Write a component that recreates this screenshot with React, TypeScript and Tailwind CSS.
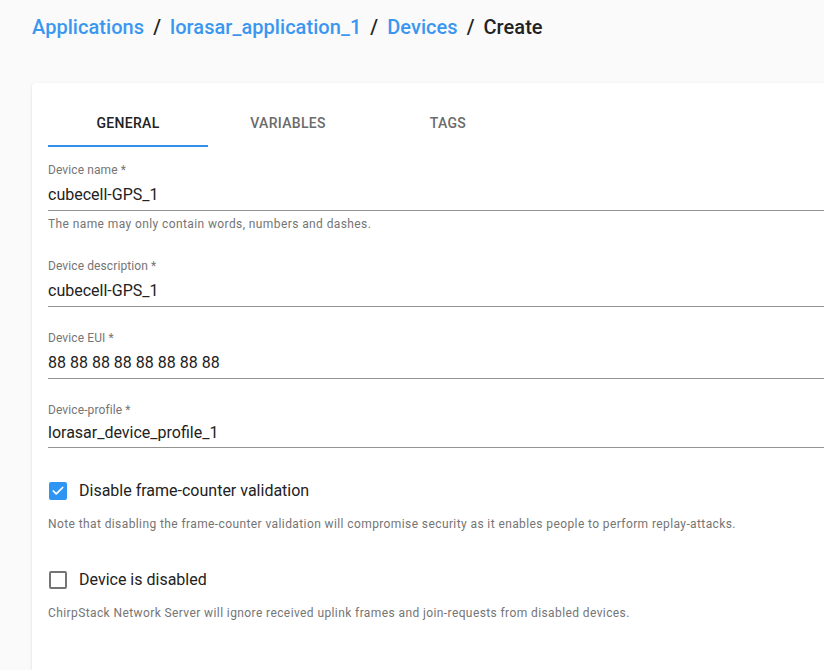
import { Check } from 'lucide-react';

const tabs = ['General', 'Variables', 'Tags'];

const crumbs = [
  { label: 'Applications', link: true },
  { label: 'lorasar_application_1', link: true },
  { label: 'Devices', link: true },
  { label: 'Create', link: false },
];

function Field({
  label,
  value,
  helper,
  select,
  className,
}: {
  label: string;
  value: string;
  helper?: string;
  select?: boolean;
  className?: string;
}) {
  return (
    <div className={className}>
      <div className="text-[12px] leading-[14px] tracking-[0.1px] text-[#757575]">{label}</div>
      <div
        className={
          select
            ? 'pt-[6px] pb-[5px] text-[16px] leading-[19px] text-[#222] border-b border-[#949494]'
            : 'pt-[8px] pb-[6px] text-[16px] leading-[19px] text-[#222] border-b border-[#949494]'
        }
      >
        {value}
      </div>
      {helper && (
        <div className="mt-[6px] text-[12px] leading-[14px] tracking-[0.4px] text-[#757575]">{helper}</div>
      )}
    </div>
  );
}

function CheckRow({ checked, label, note, className }: { checked: boolean; label: string; note: string; className?: string }) {
  return (
    <div className={className}>
      <div className="flex items-center h-12">
        {checked ? (
          <span className="ml-px flex h-[18px] w-[18px] items-center justify-center rounded-[2px] bg-[#2f95f3]">
            <Check className="h-[14px] w-[14px] text-white" strokeWidth={3} />
          </span>
        ) : (
          <span className="ml-px h-[18px] w-[18px] rounded-[2px] border-2 border-[#757575]" />
        )}
        <span className="ml-3 text-[16px] text-[#222]">{label}</span>
      </div>
      <div className="mt-[2px] text-[12px] leading-[14px] tracking-[0.4px] text-[#757575]">{note}</div>
    </div>
  );
}

export default function App() {
  return (
    <div
      className="h-[670px] w-[824px] overflow-hidden bg-[#fafafa]"
      style={{ fontFamily: 'Roboto, "Liberation Sans", sans-serif' }}
    >
      {/* breadcrumb */}
      <div className="flex items-center gap-[9px] px-8 pt-[15px] text-[20px] leading-6 font-medium tracking-[0.05px]">
        {crumbs.map((c, i) => (
          <div key={c.label} className="flex items-center gap-[9px]">
            {i > 0 && <span className="text-[#222]">/</span>}
            <span className={c.link ? 'text-[#3a97f0]' : 'text-[#222]'}>{c.label}</span>
          </div>
        ))}
      </div>

      {/* card */}
      <div className="ml-8 mt-[44px] w-[1000px] h-[700px] rounded bg-white px-4 pt-4 shadow-[0_1px_3px_rgba(0,0,0,0.12),0_1px_1px_rgba(0,0,0,0.06)]">
        <div className="flex">
          {tabs.map((t, i) => (
            <div
              key={t}
              className={
                i === 0
                  ? 'flex h-12 w-[160px] items-center justify-center border-b-2 border-[#3490e9] pt-[2px] text-[14px] font-medium uppercase tracking-[0.3px] text-[#222]'
                  : 'flex h-12 w-[160px] items-center justify-center border-b-2 border-transparent pt-[2px] text-[14px] font-medium uppercase tracking-[0.3px] text-[#6b6b6b]'
              }
            >
              {t}
            </div>
          ))}
        </div>

        <Field className="mt-4" label="Device name *" value="cubecell-GPS_1" helper="The name may only contain words, numbers and dashes." />
        <Field className="mt-[28px]" label="Device description *" value="cubecell-GPS_1" />
        <Field className="mt-[24px]" label="Device EUI *" value="88 88 88 88 88 88 88 88" />
        <Field className="mt-[24px]" label="Device-profile *" value="lorasar_device_profile_1" select />

        <CheckRow
          className="mt-[19px]"
          checked
          label="Disable frame-counter validation"
          note="Note that disabling the frame-counter validation will compromise security as it enables people to perform replay-attacks."
        />
        <CheckRow
          className="mt-[25px]"
          checked={false}
          label="Device is disabled"
          note="ChirpStack Network Server will ignore received uplink frames and join-requests from disabled devices."
        />
      </div>
    </div>
  );
}
